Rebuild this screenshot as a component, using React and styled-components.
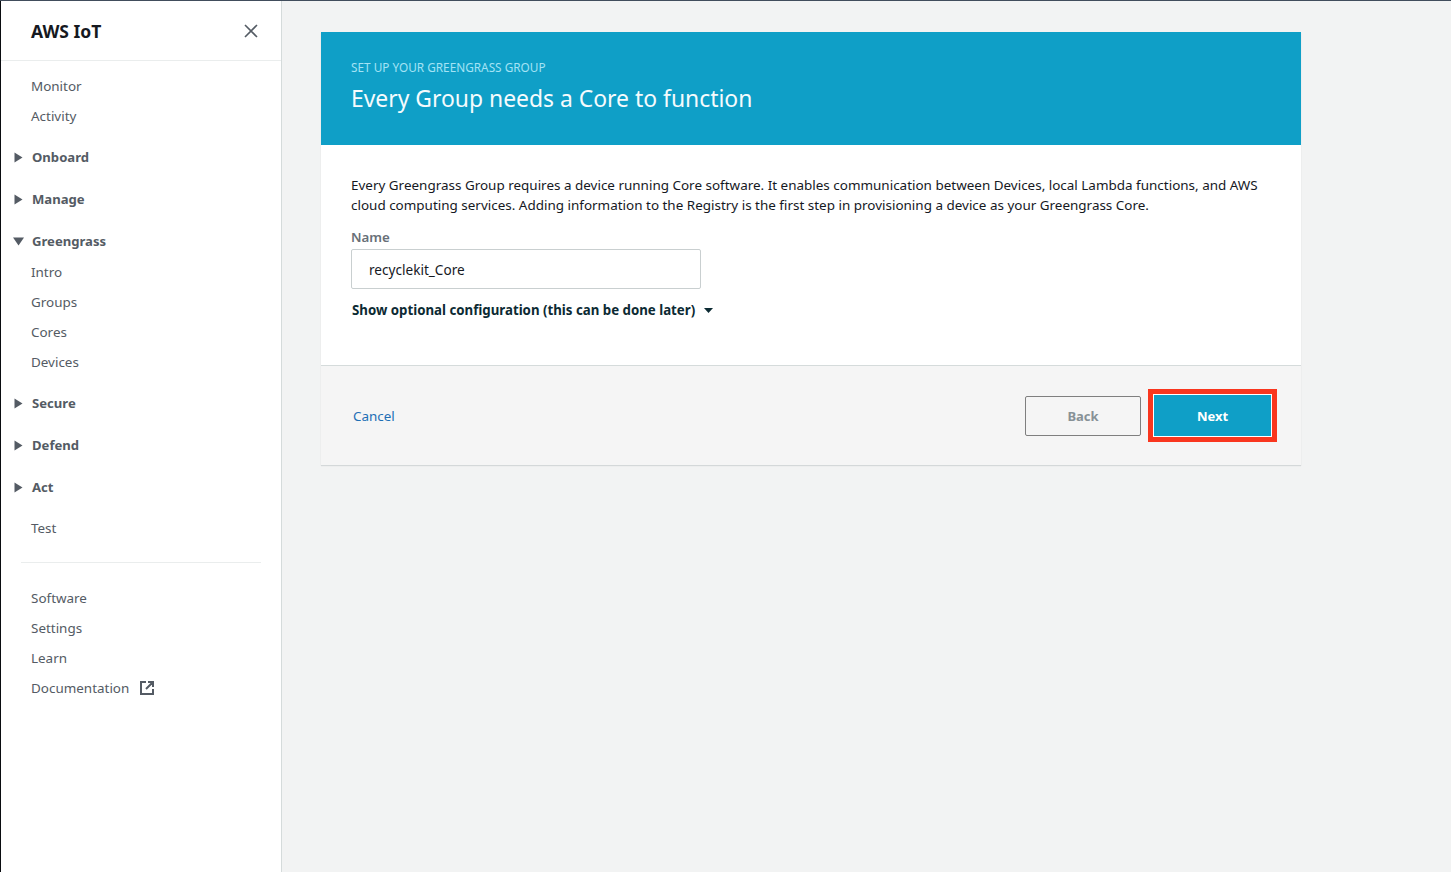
import React from 'react';
import styled, { createGlobalStyle } from 'styled-components';

const Global = createGlobalStyle`
  html, body { margin: 0; padding: 0; height: 100%; }
  body { background: #f2f3f3; font-family: "Noto Sans", "Open Sans", "Liberation Sans", sans-serif; overflow: hidden; }
  * { box-sizing: border-box; }
`;

const Page = styled.div`
  display: flex;
  width: 1451px;
  height: 872px;
  border-top: 1px solid #414d5c;
  background: #f2f3f3;
`;

const Sidebar = styled.aside`
  width: 282px;
  flex: none;
  background: #fff;
  border-left: 1px solid #0a0c10;
  border-right: 1px solid #d5dbdb;
  display: flex;
  flex-direction: column;
`;

const SideHeader = styled.div`
  height: 60px;
  display: flex;
  align-items: center;
  justify-content: space-between;
  padding: 0 23px 0 30px;
  border-bottom: 1px solid #eaeded;
`;

const Brand = styled.div`
  font-size: 17.5px;
  font-weight: 700;
  color: #16191f;
`;

const CloseBtn = styled.button`
  display: flex;
  padding: 0;
  border: 0;
  background: none;
`;

const Nav = styled.nav`
  display: flex;
  flex-direction: column;
  padding-top: 10px;
`;

const Item = styled.a`
  display: flex;
  align-items: center;
  gap: 11px;
  height: 30px;
  padding-left: 30px;
  font-size: 13.45px;
  color: #545b64;
  margin-top: ${p => p.$top || 0}px;
`;

const Group = styled.div`
  display: flex;
  align-items: center;
  height: 30px;
  margin-top: ${p => p.$top ?? 12}px;
  margin-bottom: ${p => p.$bottom || 0}px;
  padding-left: 12px;
  font-size: 13.1px;
  font-weight: 700;
  color: #545b64;
`;

const Caret = styled.svg`
  width: 11px;
  height: 11px;
  margin-right: 8px;
  fill: #545b64;
  flex: none;
`;

const Divider = styled.hr`
  width: 240px;
  height: 1px;
  margin: 19px 0 20px 20px;
  border: 0;
  background: #eaeded;
`;

const Main = styled.main`
  flex: 1;
  padding: 31px 0 0 39px;
`;

const Card = styled.section`
  width: 980px;
  background: #fff;
  box-shadow: 0 1px 1px rgba(0, 28, 36, 0.12);
`;

const Hero = styled.header`
  height: 113px;
  background: #0f9fc7;
  padding: 26px 30px 0;
`;

const Eyebrow = styled.div`
  font-size: 11.8px;
  line-height: 18px;
  color: #a4e3f5;
`;

const Title = styled.h1`
  margin: 7px 0 0;
  font-size: 22.9px;
  line-height: 32px;
  font-weight: 400;
  color: #f5fbfd;
`;

const Body = styled.div`
  height: 221px;
  padding: 30px 30px 0;
  border-bottom: 1px solid #d5dbdb;
`;

const Copy = styled.p`
  margin: 0;
  font-size: 13.46px;
  line-height: 20px;
  white-space: nowrap;
  color: #16191f;
`;

const Label = styled.label`
  display: block;
  margin-top: 12px;
  font-size: 13.3px;
  line-height: 20px;
  font-weight: 600;
  color: #687078;
`;

const NameInput = styled.div`
  width: 350px;
  height: 40px;
  margin-top: 2px;
  padding: 1px 0 0 17px;
  display: flex;
  align-items: center;
  border: 1px solid #c9cfd0;
  border-radius: 2px;
  font-size: 13.6px;
  color: #16191f;
`;

const Toggle = styled.div`
  display: flex;
  align-items: center;
  gap: 9px;
  margin: 11px 0 0 1px;
  font-size: 13.27px;
  line-height: 20px;
  font-weight: 700;
  color: #0c2a33;
`;

const Footer = styled.footer`
  height: 99px;
  padding: 0 24px 0 32px;
  background: #f5f5f5;
  display: flex;
  align-items: center;
  justify-content: space-between;
`;

const CancelLink = styled.a`
  font-size: 13.45px;
  color: #1f6fb5;
`;

const Actions = styled.div`
  display: flex;
  align-items: center;
  gap: 7px;
`;

const BackButton = styled.button`
  width: 116px;
  height: 40px;
  padding: 0;
  background: transparent;
  border: 1px solid #7f7f7f;
  border-radius: 2px;
  font: 700 13px "Noto Sans", sans-serif;
  color: #879196;
`;

const NextButton = styled.button`
  width: 129px;
  height: 53px;
  padding: 0;
  background: #0f9fc7;
  border: 5px solid #f9361e;
  box-shadow: inset 0 0 0 1px #fff;
  font: 700 13px "Noto Sans", sans-serif;
  color: #fff;
`;

const ClosedCaret = () => (
  <Caret viewBox="0 0 11 11"><path d="M1.5 0.5 L9.5 5.5 L1.5 10.5 Z" /></Caret>
);
const OpenCaret = () => (
  <Caret viewBox="0 0 11 11"><path d="M0 1.5 L11 1.5 L5.5 9.5 Z" /></Caret>
);

const top = ['Monitor', 'Activity'];
const green = ['Intro', 'Groups', 'Cores', 'Devices'];
const bottom = ['Software', 'Settings', 'Learn'];

export default function App() {
  return (
    <Page>
      <Global />
      <Sidebar>
        <SideHeader>
          <Brand>AWS IoT</Brand>
          <CloseBtn aria-label="Close">
            <svg width="14" height="14" viewBox="0 0 14 14" fill="none" stroke="#545b64" strokeWidth="1.6">
              <path d="M1 1 L13 13 M13 1 L1 13" />
            </svg>
          </CloseBtn>
        </SideHeader>
        <Nav>
          {top.map(t => <Item key={t}>{t}</Item>)}
          <Group $top={11}><ClosedCaret />Onboard</Group>
          <Group><ClosedCaret />Manage</Group>
          <Group $bottom={1}><OpenCaret />Greengrass</Group>
          {green.map(t => <Item key={t}>{t}</Item>)}
          <Group $top={11}><ClosedCaret />Secure</Group>
          <Group><ClosedCaret />Defend</Group>
          <Group><ClosedCaret />Act</Group>
          <Item $top={11}>Test</Item>
          <Divider />
          {bottom.map(t => <Item key={t}>{t}</Item>)}
          <Item>
            Documentation
            <svg width="14" height="14" viewBox="0 0 14 14" fill="none" stroke="#545b64" strokeWidth="2">
              <path d="M6 1 H1 V13 H13 V8 M8 1 H13 V6 M13 1 L6 8" />
            </svg>
          </Item>
        </Nav>
      </Sidebar>
      <Main>
        <Card>
          <Hero>
            <Eyebrow>SET UP YOUR GREENGRASS GROUP</Eyebrow>
            <Title>Every Group needs a Core to function</Title>
          </Hero>
          <Body>
            <Copy>
              Every Greengrass Group requires a device running Core software. It enables communication between Devices, local Lambda functions, and AWS
              <br />
              cloud computing services. Adding information to the Registry is the first step in provisioning a device as your Greengrass Core.
            </Copy>
            <Label>Name</Label>
            <NameInput>recyclekit_Core</NameInput>
            <Toggle>
              Show optional configuration (this can be done later)
              <svg width="9" height="5" viewBox="0 0 9 5" fill="#0c2a33"><path d="M0 0 H9 L4.5 5 Z" /></svg>
            </Toggle>
          </Body>
          <Footer>
            <CancelLink>Cancel</CancelLink>
            <Actions>
              <BackButton>Back</BackButton>
              <NextButton>Next</NextButton>
            </Actions>
          </Footer>
        </Card>
      </Main>
    </Page>
  );
}
